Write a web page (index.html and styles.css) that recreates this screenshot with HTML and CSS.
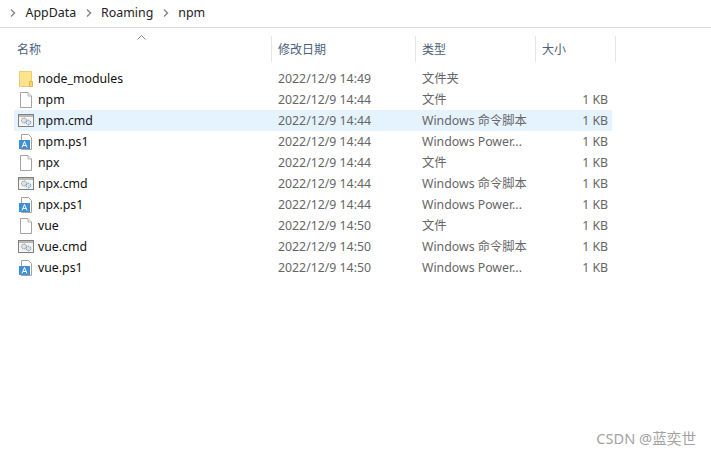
FILE: index.html
```html
<!DOCTYPE html>
<html lang="zh-CN">
<head>
    <meta charset="UTF-8">
    <title>npm</title>
    <link rel="stylesheet" href="styles.css">
</head>
<body>
    <svg class="defs" width="0" height="0">
        <symbol id="i-folder" viewBox="0 0 16 18">
            <path d="M1.500 1.500h12v15h-12z" fill="#fde38d" stroke="#eccb6c"/>
            <path d="M11.500 16.500v-5h3v5z" fill="#f7d56f" stroke="#dfb64f"/>
        </symbol>
        <symbol id="i-file" viewBox="0 0 16 18">
            <path d="M2.500 1.500h7.500l3.500 3.500v11.500h-11z" fill="#fff" stroke="#a3a3a3"/>
            <path d="M10 1.500v3.500h3.500" fill="#f2f2f2" stroke="#b5b5b5"/>
        </symbol>
        <symbol id="i-cmd" viewBox="0 0 16 18">
            <rect x="0.500" y="2.500" width="15" height="12" fill="#f4f4f4" stroke="#808080"/>
            <rect x="1" y="3" width="14" height="2" fill="#b9b9b9"/>
            <circle cx="6" cy="8.500" r="2.500" fill="#e2e2e2" stroke="#8f8f8f" stroke-dasharray="1.500 .7"/>
            <circle cx="10.500" cy="10.500" r="2.300" fill="#cfe3f2" stroke="#6f93b3" stroke-dasharray="1.500 .7"/>
        </symbol>
        <symbol id="i-ps" viewBox="0 0 16 18">
            <path d="M3.500 1.500h7l3 3v12h-10z" fill="#fff" stroke="#a3a3a3"/>
            <rect x="1" y="7" width="11" height="9" fill="#3f8fd6"/>
            <path d="M4 14.500l2.500-6 2.500 6M5 12.500h3" fill="none" stroke="#fff"/>
        </symbol>
    </svg>

    <nav class="crumbs">
        <svg class="chev" width="6" height="8" viewBox="0 0 6 8"><path d="M1 0.500l3.500 3.500-3.500 3.500" fill="none" stroke="#8a8a8a" stroke-width="1.500"/></svg>
        <span>AppData</span>
        <svg class="chev" width="6" height="8" viewBox="0 0 6 8"><path d="M1 0.500l3.500 3.500-3.500 3.500" fill="none" stroke="#8a8a8a" stroke-width="1.500"/></svg>
        <span>Roaming</span>
        <svg class="chev" width="6" height="8" viewBox="0 0 6 8"><path d="M1 0.500l3.500 3.500-3.500 3.500" fill="none" stroke="#8a8a8a" stroke-width="1.500"/></svg>
        <span>npm</span>
    </nav>

    <div class="list">
        <div class="head">
            <div class="col-name">名称<svg class="sort" width="9" height="5" viewBox="0 0 9 5"><path d="M0.500 4.500l4-4 4 4" fill="none" stroke="#8a8a8a"/></svg></div>
            <div class="col-date">修改日期</div>
            <div class="col-type">类型</div>
            <div class="col-size">大小</div>
        </div>

        <div class="row">
            <div class="col-name"><svg class="ico" width="16" height="18"><use href="#i-folder"/></svg><span>node_modules</span></div>
            <div class="col-date">2022/12/9 14:49</div>
            <div class="col-type">文件夹</div>
            <div class="col-size"></div>
        </div>
        <div class="row">
            <div class="col-name"><svg class="ico" width="16" height="18"><use href="#i-file"/></svg><span>npm</span></div>
            <div class="col-date">2022/12/9 14:44</div>
            <div class="col-type">文件</div>
            <div class="col-size">1 KB</div>
        </div>
        <div class="row selected">
            <div class="col-name"><svg class="ico" width="16" height="18"><use href="#i-cmd"/></svg><span>npm.cmd</span></div>
            <div class="col-date">2022/12/9 14:44</div>
            <div class="col-type">Windows 命令脚本</div>
            <div class="col-size">1 KB</div>
        </div>
        <div class="row">
            <div class="col-name"><svg class="ico" width="16" height="18"><use href="#i-ps"/></svg><span>npm.ps1</span></div>
            <div class="col-date">2022/12/9 14:44</div>
            <div class="col-type">Windows Power...</div>
            <div class="col-size">1 KB</div>
        </div>
        <div class="row">
            <div class="col-name"><svg class="ico" width="16" height="18"><use href="#i-file"/></svg><span>npx</span></div>
            <div class="col-date">2022/12/9 14:44</div>
            <div class="col-type">文件</div>
            <div class="col-size">1 KB</div>
        </div>
        <div class="row">
            <div class="col-name"><svg class="ico" width="16" height="18"><use href="#i-cmd"/></svg><span>npx.cmd</span></div>
            <div class="col-date">2022/12/9 14:44</div>
            <div class="col-type">Windows 命令脚本</div>
            <div class="col-size">1 KB</div>
        </div>
        <div class="row">
            <div class="col-name"><svg class="ico" width="16" height="18"><use href="#i-ps"/></svg><span>npx.ps1</span></div>
            <div class="col-date">2022/12/9 14:44</div>
            <div class="col-type">Windows Power...</div>
            <div class="col-size">1 KB</div>
        </div>
        <div class="row">
            <div class="col-name"><svg class="ico" width="16" height="18"><use href="#i-file"/></svg><span>vue</span></div>
            <div class="col-date">2022/12/9 14:50</div>
            <div class="col-type">文件</div>
            <div class="col-size">1 KB</div>
        </div>
        <div class="row">
            <div class="col-name"><svg class="ico" width="16" height="18"><use href="#i-cmd"/></svg><span>vue.cmd</span></div>
            <div class="col-date">2022/12/9 14:50</div>
            <div class="col-type">Windows 命令脚本</div>
            <div class="col-size">1 KB</div>
        </div>
        <div class="row">
            <div class="col-name"><svg class="ico" width="16" height="18"><use href="#i-ps"/></svg><span>vue.ps1</span></div>
            <div class="col-date">2022/12/9 14:50</div>
            <div class="col-type">Windows Power...</div>
            <div class="col-size">1 KB</div>
        </div>
    </div>

    <div class="mark">CSDN @蓝奕世</div>
</body>
</html>
```

FILE: styles.css
```css
html, body {
    height: 100%;
}
body {
    margin: 0;
    background: #fff;
    color: #1a1a1a;
    font-family: "Noto Sans", "Noto Sans CJK SC", sans-serif;
    font-size: 12.300px;
    overflow: hidden;
}
.defs {
    position: absolute;
}
.crumbs {
    display: flex;
    align-items: center;
    gap: 9.500px;
    height: 25px;
    padding: 0 0 2px 10px;
    border-bottom: 1px solid #d9d9d9;
    font-size: 12.400px;
    color: #222;
}
.chev {
    flex: none;
}
.list {
    padding: 8px 0 0 14px;
    width: 602px;
}
.head, .row {
    display: grid;
}
.head {
    grid-template-columns: 258px 144px 120px 80px;
    height: 26px;
    margin-bottom: 6px;
    color: #4c607a;
    font-size: 12px;
}
.head > div {
    display: flex;
    align-items: center;
    padding-left: 6px;
    border-right: 1px solid #e5e5e5;
    box-sizing: border-box;
}
.head .col-name {
    position: relative;
    padding-left: 3px;
}
.sort {
    position: absolute;
    left: 123px;
    top: -1px;
}
.row {
    height: 21px;
    line-height: 21px;
    width: 598px;
    grid-template-columns: 257px 144px 120px 77px;
}
.row.selected {
    background: #e5f3ff;
}
.row .col-name {
    display: flex;
    align-items: center;
    gap: 4px;
    padding-left: 4px;
    color: #111;
}
.row .col-date, .row .col-type, .row .col-size {
    color: #666;
    padding-left: 7px;
}
.row .col-size {
    text-align: right;
    padding-right: 4px;
}
.ico {
    flex: none;
}
.mark {
    position: absolute;
    right: 15px;
    bottom: 7px;
    font-size: 14.600px;
    color: #a3a3a3;
}
```
